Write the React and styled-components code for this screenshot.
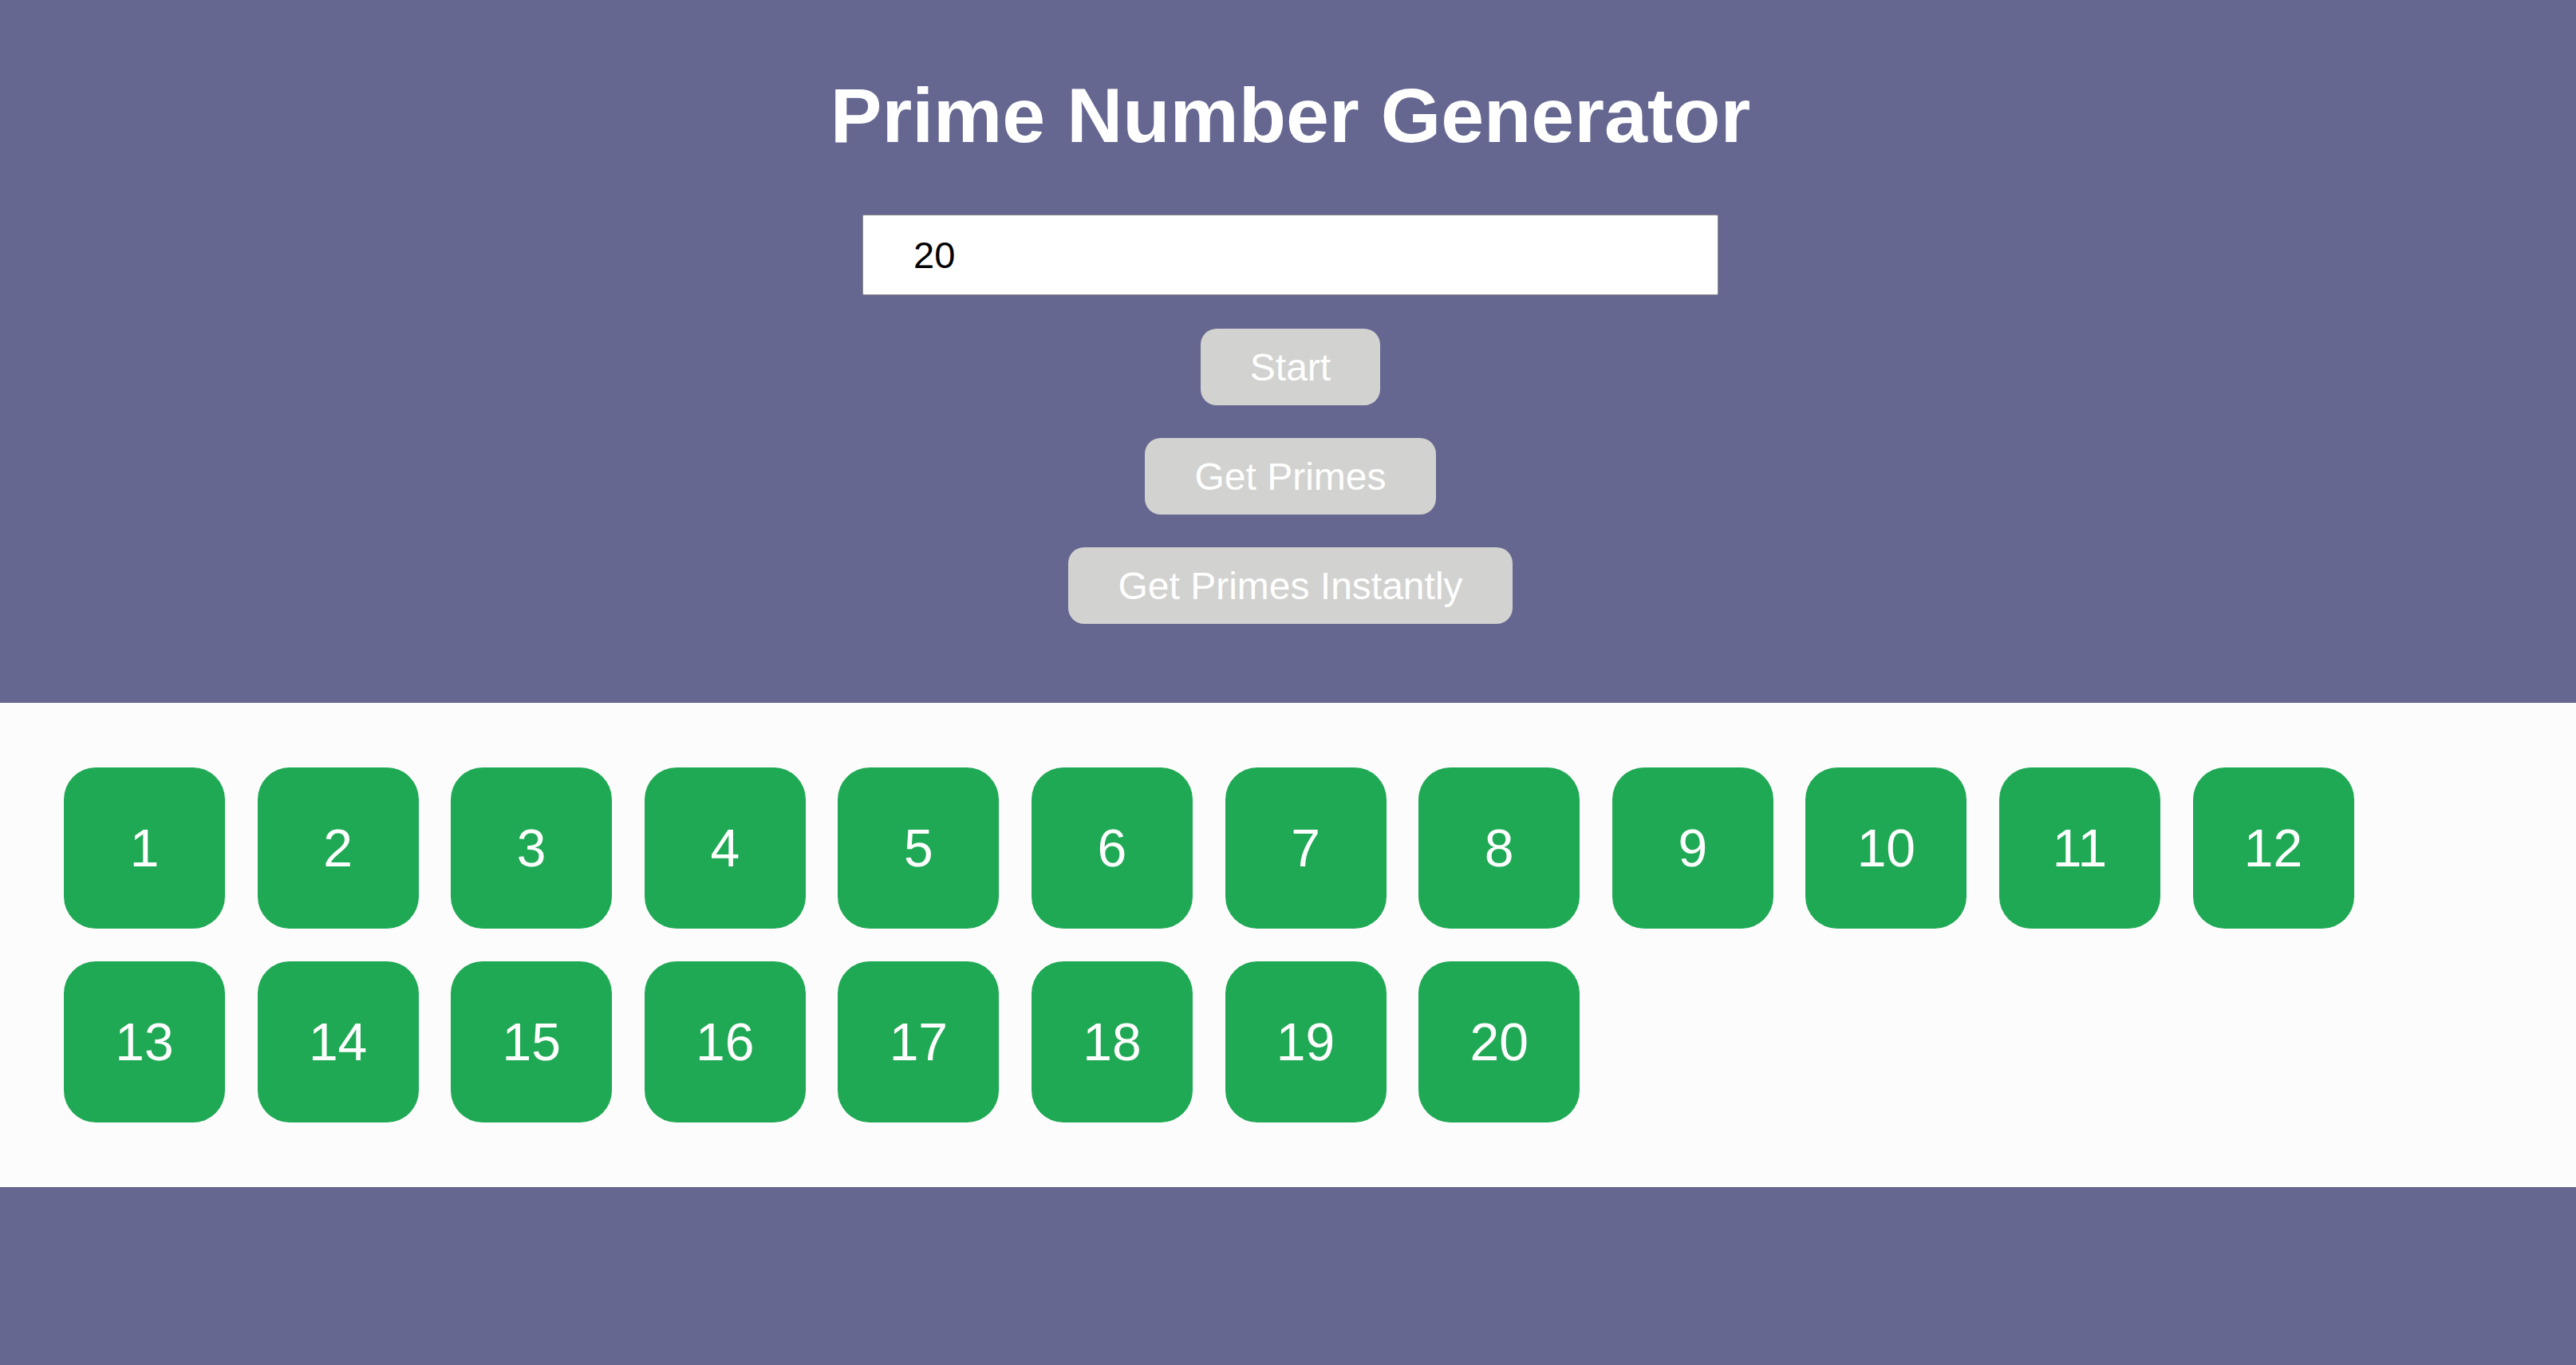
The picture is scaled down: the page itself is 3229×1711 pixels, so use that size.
import React from 'react';
import styled, { createGlobalStyle } from 'styled-components';

const GlobalStyle = createGlobalStyle`
    body {
        margin: 0;
        background-color: #656790;
        font-family: "Liberation Sans", Arial, sans-serif;
    }
`;

const Header = styled.header`
    display: flex;
    flex-direction: column;
    align-items: center;
    padding: 89px 0 99px 6px;
`;

const Title = styled.h1`
    margin: 0 0 68px;
    font-size: 97px;
    font-weight: bold;
    color: white;
`;

const Input = styled.input`
    box-sizing: border-box;
    width: 1073px;
    height: 101px;
    padding: 0 63px;
    margin-bottom: 42px;
    border: 1px solid #8a8a8a;
    border-radius: 2px;
    background-color: white;
    color: black;
    font-family: "Liberation Sans", Arial, sans-serif;
    font-size: 47px;
    outline: none;
`;

const Buttons = styled.div`
    display: flex;
    flex-direction: column;
    align-items: center;
    gap: 41px;
`;

const Button = styled.button`
    box-sizing: border-box;
    height: 96px;
    padding: 0 62px;
    border: none;
    border-radius: 20px;
    background-color: #d2d2d0;
    color: white;
    font-family: "Liberation Sans", Arial, sans-serif;
    font-size: 48px;
    cursor: pointer;
`;

const Grid = styled.section`
    display: flex;
    flex-wrap: wrap;
    gap: 41px 40.6px;
    padding: 81px 80px;
    background-color: #fcfcfc;
`;

const Tile = styled.div`
    width: 202px;
    height: 202px;
    display: flex;
    align-items: center;
    justify-content: center;
    border-radius: 40px;
    background-color: #20a955;
    color: white;
    font-size: 66px;
`;

const numbers = Array.from({ length: 20 }, (_, i) => i + 1);

const App = () => {
    return (
        <>
            <GlobalStyle />
            <Header>
                <Title>Prime Number Generator</Title>
                <Input defaultValue="20" />
                <Buttons>
                    <Button>Start</Button>
                    <Button>Get Primes</Button>
                    <Button>Get Primes Instantly</Button>
                </Buttons>
            </Header>
            <Grid>
                {numbers.map((n) => (
                    <Tile key={n}>{n}</Tile>
                ))}
            </Grid>
        </>
    );
};

export default App;
